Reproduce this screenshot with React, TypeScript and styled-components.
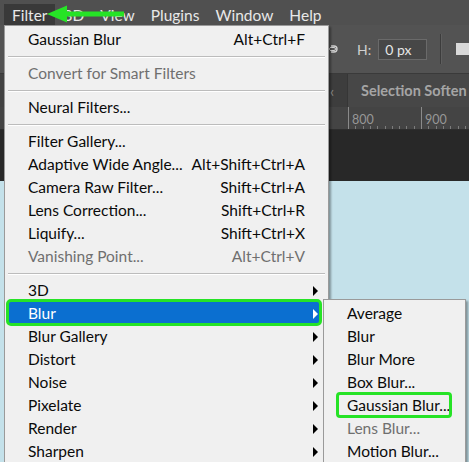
import React from 'react';
import styled, { createGlobalStyle, css } from 'styled-components';

const GlobalStyle = createGlobalStyle`
  html, body {
    margin: 0;
    padding: 0;
    background: #c4e1ea;
  }
  * {
    box-sizing: border-box;
  }
`;

const GREEN = '#26e326';

// whole screen
const Screen = styled.div`
  position: relative;
  width: 469px;
  height: 462px;
  overflow: hidden;
  display: flex;
  flex-direction: column;
  font-family: Lato, 'Liberation Sans', sans-serif;
`;

// top menu bar
const MenuBar = styled.div`
  height: 25px;
  display: flex;
  align-items: stretch;
  padding-left: 4px;
  background: #505050;
  flex-shrink: 0;
`;

const MenuTitle = styled.div<{ $open?: boolean }>`
  display: flex;
  align-items: center;
  padding: 1px 8px 0 8px;
  margin-top: 4px;
  font-size: 15.5px;
  color: #e8e8e8;
  background: ${(p) => (p.$open ? '#393939' : 'transparent')};
`;

// photoshop options bar
const OptionsBar = styled.div`
  height: 48px;
  display: flex;
  align-items: center;
  padding-left: 322px;
  background: #535353;
  flex-shrink: 0;
  white-space: nowrap;
`;

const LinkIcon = styled.svg`
  width: 16px;
  height: 10px;
  flex-shrink: 0;
`;

const FieldLabel = styled.span`
  margin-left: 19px;
  font-size: 14px;
  color: #d0d0d0;
`;

const FieldInput = styled.div`
  margin-left: 7px;
  width: 51px;
  height: 21px;
  padding-left: 6px;
  display: flex;
  align-items: center;
  font-size: 14px;
  color: #e6e6e6;
  background: #474747;
  border: 1px solid #6a6a6a;
`;

const BarDivider = styled.div`
  margin-left: 13px;
  width: 1px;
  height: 30px;
  background: #3c3c3c;
  box-shadow: 1px 0 0 #5e5e5e;
`;

const Swatch = styled.div`
  margin-left: 15px;
  width: 13px;
  height: 12px;
  flex-shrink: 0;
  background: #d9d9d9;
`;

// document tabs
const TabBar = styled.div`
  height: 34px;
  display: flex;
  align-items: stretch;
  padding-left: 327px;
  background: #424242;
  border-top: 1px solid #3a3a3a;
  flex-shrink: 0;
  white-space: nowrap;
`;

const TabScroller = styled.div`
  width: 20px;
  display: flex;
  align-items: center;
  padding-left: 3px;
  font-size: 15px;
  color: #8d8d8d;
  background: #3d3d3d;
`;

const DocTab = styled.div`
  display: flex;
  align-items: center;
  padding-left: 13px;
  font-size: 14.5px;
  font-weight: 700;
  color: #a5a5a5;
  background: #474747;
  border-left: 1px solid #363636;
  flex: 1;
`;

// horizontal ruler
const Ruler = styled.div`
  height: 23px;
  display: flex;
  padding-left: 348px;
  background-color: #444444;
  background-image: repeating-linear-gradient(
    to right,
    #7c7c7c 0 1px,
    transparent 1px 7.3px
  );
  background-size: 100% 3px;
  background-repeat: no-repeat;
  background-position: 348px bottom;
  border-bottom: 1px solid #2e2e2e;
  flex-shrink: 0;
`;

const RulerMark = styled.div`
  width: 73px;
  flex-shrink: 0;
  padding: 5px 0 0 3px;
  font-size: 12.5px;
  color: #979797;
  border-left: 1px solid #8a8a8a;
`;

const Pasteboard = styled.div`
  height: 51px;
  background: #282828;
  flex-shrink: 0;
`;

const Canvas = styled.div`
  flex: 1;
  background: #c4e1ea;
`;

// dropdown menus
const Dropdown = styled.div`
  position: absolute;
  left: 4px;
  top: 25px;
  width: 325px;
  padding-top: 2px;
  background: #f0f0f0;
  border: 1px solid #9a9a9a;
  box-shadow: 2px 2px 2px rgba(0, 0, 0, 0.35);
`;

const SubDropdown = styled(Dropdown)`
  left: 323px;
  top: 299px;
  width: 143px;
`;

const Item = styled.div<{ $disabled?: boolean; $active?: boolean; $marked?: boolean }>`
  position: relative;
  height: 23px;
  display: grid;
  grid-template-columns: 1fr auto 23px;
  align-items: center;
  padding-left: 23px;
  font-size: 15.5px;
  line-height: 23px;
  white-space: nowrap;
  color: ${(p) => (p.$disabled ? '#6f6f6f' : '#0a0a0a')};

  ${(p) =>
    p.$active &&
    css`
      color: #ffffff;
      &::before {
        content: '';
        position: absolute;
        top: -3px;
        bottom: -1px;
        left: 1px;
        right: 6px;
        background: #0b6fd0;
        border: 3px solid ${GREEN};
        border-radius: 5px;
      }
    `}

  ${(p) =>
    p.$marked &&
    css`
      &::after {
        content: '';
        position: absolute;
        top: -2px;
        bottom: -1px;
        left: 12px;
        right: 13px;
        border: 3px solid ${GREEN};
        border-radius: 4px;
      }
    `}
`;

const Label = styled.span`
  position: relative;
`;

const Shortcut = styled.span`
  position: relative;
  text-align: right;
`;

const ArrowCell = styled.span`
  position: relative;
  display: flex;
  align-items: center;
  padding-left: 8px;
`;

const SubArrow = styled.span<{ $light?: boolean }>`
  width: 0;
  height: 0;
  border-top: 5px solid transparent;
  border-bottom: 5px solid transparent;
  border-left: 5px solid ${(p) => (p.$light ? '#ffffff' : '#000000')};
`;

const Separator = styled.div`
  height: 11px;
  display: flex;
  align-items: center;
  padding: 0 3px;

  &::before {
    content: '';
    flex: 1;
    height: 1px;
    background: #bcbcbc;
    box-shadow: 0 1px 0 #ffffff;
  }
`;

// annotation arrow pointing at Filter
const Pointer = styled.svg`
  position: absolute;
  left: 46px;
  top: 4px;
  width: 80px;
  height: 20px;
`;

type Entry =
  | 'sep'
  | { label: string; shortcut?: string; disabled?: boolean; sub?: boolean; active?: boolean; marked?: boolean };

const filterMenu: Entry[] = [
  { label: 'Gaussian Blur', shortcut: 'Alt+Ctrl+F' },
  'sep',
  { label: 'Convert for Smart Filters', disabled: true },
  'sep',
  { label: 'Neural Filters...' },
  'sep',
  { label: 'Filter Gallery...' },
  { label: 'Adaptive Wide Angle...', shortcut: 'Alt+Shift+Ctrl+A' },
  { label: 'Camera Raw Filter...', shortcut: 'Shift+Ctrl+A' },
  { label: 'Lens Correction...', shortcut: 'Shift+Ctrl+R' },
  { label: 'Liquify...', shortcut: 'Shift+Ctrl+X' },
  { label: 'Vanishing Point...', shortcut: 'Alt+Ctrl+V', disabled: true },
  'sep',
  { label: '3D', sub: true },
  { label: 'Blur', sub: true, active: true },
  { label: 'Blur Gallery', sub: true },
  { label: 'Distort', sub: true },
  { label: 'Noise', sub: true },
  { label: 'Pixelate', sub: true },
  { label: 'Render', sub: true },
  { label: 'Sharpen', sub: true },
];

const blurMenu: Entry[] = [
  { label: 'Average' },
  { label: 'Blur' },
  { label: 'Blur More' },
  { label: 'Box Blur...' },
  { label: 'Gaussian Blur...', marked: true },
  { label: 'Lens Blur...', disabled: true },
  { label: 'Motion Blur...' },
];

const MenuList: React.FC<{ entries: Entry[] }> = ({ entries }) => (
  <>
    {entries.map((e, i) =>
      e === 'sep' ? (
        <Separator key={i} />
      ) : (
        <Item key={i} $disabled={e.disabled} $active={e.active} $marked={e.marked}>
          <Label>{e.label}</Label>
          <Shortcut>{e.shortcut}</Shortcut>
          <ArrowCell>{e.sub && <SubArrow $light={e.active} />}</ArrowCell>
        </Item>
      )
    )}
  </>
);

const App: React.FC = () => {
  return (
    <Screen>
      <GlobalStyle />
      <MenuBar>
        <MenuTitle $open>Filter</MenuTitle>
        <MenuTitle>3D</MenuTitle>
        <MenuTitle>View</MenuTitle>
        <MenuTitle>Plugins</MenuTitle>
        <MenuTitle>Window</MenuTitle>
        <MenuTitle>Help</MenuTitle>
      </MenuBar>

      <OptionsBar>
        <LinkIcon viewBox="0 0 16 10">
          <path d="M1 5h7" stroke="#cfcfcf" strokeWidth="1.4" />
          <path d="M9 2h3a3 3 0 0 1 0 6h-3" fill="none" stroke="#cfcfcf" strokeWidth="1.4" />
          <path d="M8 3.5h4a1.5 1.5 0 0 1 0 3h-4" fill="none" stroke="#cfcfcf" strokeWidth="1" />
        </LinkIcon>
        <FieldLabel>H:</FieldLabel>
        <FieldInput>0 px</FieldInput>
        <BarDivider />
        <Swatch />
      </OptionsBar>

      <TabBar>
        <TabScroller>‹</TabScroller>
        <DocTab>Selection Soften</DocTab>
      </TabBar>

      <Ruler>
        <RulerMark>800</RulerMark>
        <RulerMark>900</RulerMark>
      </Ruler>

      <Pasteboard />
      <Canvas />

      <Dropdown>
        <MenuList entries={filterMenu} />
      </Dropdown>

      <SubDropdown>
        <MenuList entries={blurMenu} />
      </SubDropdown>

      <Pointer viewBox="0 0 80 20">
        <polygon points="1,10 21,1.5 21,7.5 78,7.5 78,12.5 21,12.5 21,18.5" fill={GREEN} />
      </Pointer>
    </Screen>
  );
};

export default App;
